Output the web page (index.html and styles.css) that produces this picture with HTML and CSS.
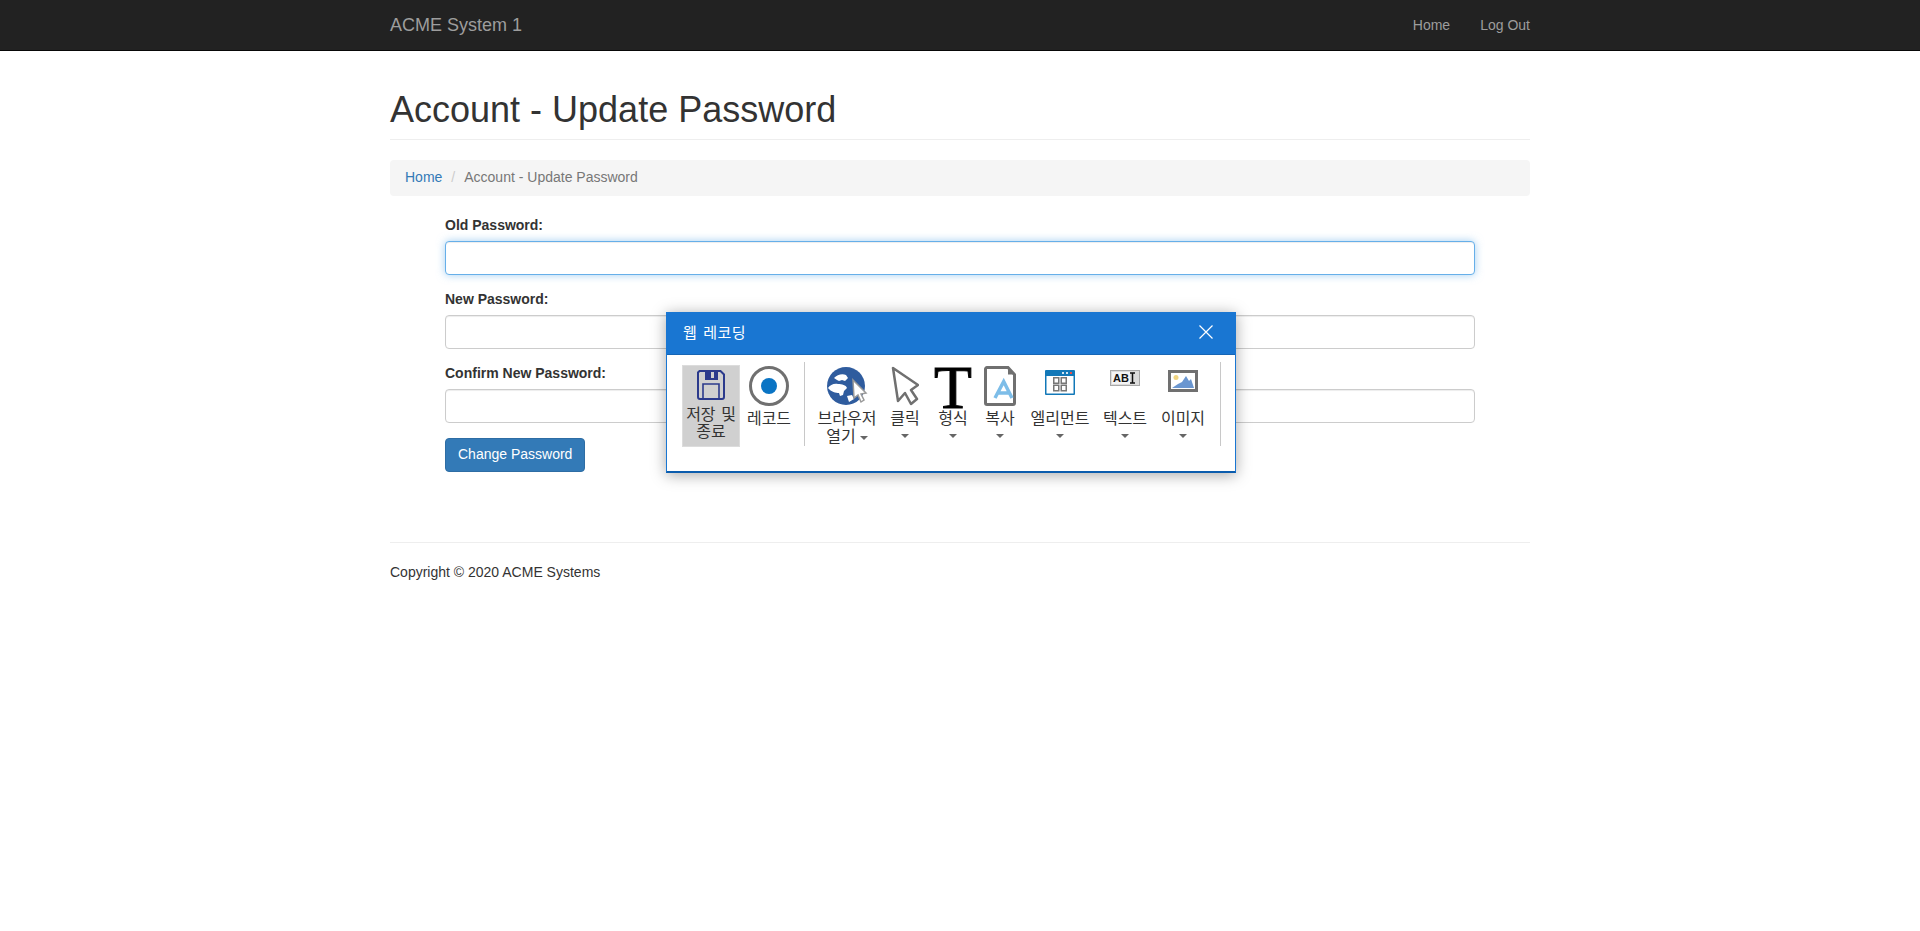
FILE: index.html
```html
<!DOCTYPE html>
<html lang="en">
<head>
    <meta charset="UTF-8">
    <title>Account - Update Password</title>
    <link rel="stylesheet" href="styles.css">
</head>
<body>

<div class="navbar">
    <div class="container navbar-inner">
        <a class="brand" href="#">ACME System 1</a>
        <ul class="nav-links">
            <li><a href="#">Home</a></li>
            <li><a href="#">Log Out</a></li>
        </ul>
    </div>
</div>

<div class="container">
    <div class="page-header"><h1>Account - Update Password</h1></div>

    <ol class="breadcrumb">
        <li><a href="#">Home</a></li>
        <li class="divider">/</li>
        <li class="active">Account - Update Password</li>
    </ol>

    <form class="password-form">
        <div class="form-group">
            <label for="old">Old Password:</label>
            <input id="old" class="form-control focused" type="password">
        </div>
        <div class="form-group">
            <label for="new">New Password:</label>
            <input id="new" class="form-control" type="password">
        </div>
        <div class="form-group">
            <label for="confirm">Confirm New Password:</label>
            <input id="confirm" class="form-control" type="password">
        </div>
        <button class="btn-primary" type="button">Change Password</button>
    </form>

    <hr class="footer-rule">
    <p class="copyright">Copyright © 2020 ACME Systems</p>
</div>

<div class="recorder">
    <div class="recorder-title">
        <span>웹 레코딩</span>
        <svg class="close-icon" width="14" height="14" viewBox="0 0 14 14"><path d="M0.5 0.5L13.5 13.5M13.5 0.5L0.5 13.5" stroke="#fff" stroke-width="1.2" fill="none"/></svg>
    </div>
    <div class="toolbar">
        <div class="tool tool-save">
            <div class="tool-icon">
                <svg width="28" height="30" viewBox="0 0 28 30">
                    <path d="M2.5 1h21l3.500 3.500V27a2 2 0 0 1-2 2H3a2 2 0 0 1-2-2V2.500z" fill="#d0d0d0" stroke="#2b3a8c" stroke-width="2"/>
                    <rect x="8" y="1" width="13" height="9" fill="#2b3a8c"/>
                    <rect x="14" y="2" width="3" height="6" fill="#d0d0d0"/>
                    <path d="M6 29V14h16v15" fill="none" stroke="#2b3a8c" stroke-width="1.600"/>
                </svg>
            </div>
            <div class="tool-label">저장 및<br>종료</div>
        </div>
        <div class="tool tool-record">
            <div class="tool-icon">
                <svg width="40" height="40" viewBox="0 0 40 40">
                    <circle cx="20" cy="20" r="18.500" fill="#fff" stroke="#707070" stroke-width="3"/>
                    <circle cx="20" cy="20" r="8" fill="#0a74c4"/>
                </svg>
            </div>
            <div class="tool-label">레코드</div>
        </div>
        <div class="tool-sep"></div>
        <div class="tool tool-browser">
            <div class="tool-icon">
                <svg width="42" height="40" viewBox="0 0 42 40">
                    <circle cx="20" cy="20" r="19" fill="#2f5c9e"/>
                    <path d="M8 12c3-3 8-5 12-3l2 3-3 3-3-1-3 1-2-1zM2 22c2-3 6-5 10-4 4 0 8 1 9 4l-3 3-1 4-3 1-1-3c-3 0-8-1-11-5zM21 30l5-1 2 4-5 3z" fill="#fff"/>
                    <path d="M27 14l13 13-5 1 3 6-3 2-3-7-4 3z" fill="#fff" stroke="#999" stroke-width="1.500"/>
                </svg>
            </div>
            <div class="tool-label">브라우저<br>열기<span class="caret caret-inline"></span></div>
        </div>
        <div class="tool tool-click">
            <div class="tool-icon">
                <svg width="28" height="40" viewBox="0 0 28 40">
                    <path d="M2 2L7 35 14 27 20 38 26 33 20 24 27 19z" fill="#fff" stroke="#707070" stroke-width="2.500" stroke-linejoin="round"/>
                </svg>
            </div>
            <div class="tool-label">클릭</div>
            <span class="caret"></span>
        </div>
        <div class="tool tool-format">
            <div class="tool-icon glyph-t">T</div>
            <div class="tool-label">형식</div>
            <span class="caret"></span>
        </div>
        <div class="tool tool-copy">
            <div class="tool-icon">
                <svg width="32" height="40" viewBox="0 0 32 40">
                    <path d="M3 1.500h21l6.500 7V37a1.500 1.500 0 0 1-1.500 1.500H3A1.500 1.500 0 0 1 1.500 37V3A1.500 1.500 0 0 1 3 1.500z" fill="#fff" stroke="#707070" stroke-width="3"/>
                    <path d="M24 1.500v7h6.500z" fill="#707070"/>
                    <path d="M11 32L19.700 15.500 28 32M14 27h11" fill="none" stroke="#7dbde8" stroke-width="3.500"/>
                </svg>
            </div>
            <div class="tool-label">복사</div>
            <span class="caret"></span>
        </div>
        <div class="tool tool-element">
            <div class="tool-icon">
                <svg class="icon-low" width="30" height="25" viewBox="0 0 30 25">
                    <rect width="30" height="25" rx="1" fill="#1278b8"/>
                    <rect x="1.500" y="6" width="27" height="17.500" fill="#fff"/>
                    <rect x="17" y="2" width="2" height="2" fill="#cfe4f2"/>
                    <rect x="21" y="2" width="2" height="2" fill="#cfe4f2"/>
                    <rect x="25" y="2" width="2" height="2" fill="#e8504a"/>
                    <g fill="none" stroke="#777" stroke-width="1.500">
                        <rect x="8.750" y="7.750" width="5" height="5.500"/>
                        <rect x="16.250" y="7.750" width="5" height="5.500"/>
                        <rect x="8.750" y="15.250" width="5" height="5.500"/>
                        <rect x="16.250" y="15.250" width="5" height="5.500"/>
                    </g>
                </svg>
            </div>
            <div class="tool-label">엘리먼트</div>
            <span class="caret"></span>
        </div>
        <div class="tool tool-text">
            <div class="tool-icon">
                <svg class="icon-low" width="30" height="16" viewBox="0 0 30 16">
                    <rect x="0.500" y="0.500" width="29" height="15" fill="#dcdcdc" stroke="#a8a8a8"/>
                    <rect x="2" y="2" width="18" height="12" fill="#f4f4f4"/>
                    <path d="M20 3h5M20 13h5M22.500 3v10" fill="none" stroke="#111" stroke-width="1.500"/>
                </svg>
                <span class="ab-text">AB</span>
            </div>
            <div class="tool-label">텍스트</div>
            <span class="caret"></span>
        </div>
        <div class="tool tool-image">
            <div class="tool-icon">
                <svg class="icon-low" width="30" height="22" viewBox="0 0 30 22">
                    <rect x="1.500" y="1.500" width="27" height="19" fill="#fff" stroke="#707070" stroke-width="3"/>
                    <circle cx="8" cy="7.500" r="2.500" fill="#f0d480"/>
                    <path d="M4 18L10 14 14 12 18 6 21 11 23 9 26 18z" fill="#6a96d0"/>
                </svg>
            </div>
            <div class="tool-label">이미지</div>
            <span class="caret"></span>
        </div>
        <div class="tool-sep tool-sep-end"></div>
    </div>
</div>

</body>
</html>
```

FILE: styles.css
```css
* {
    box-sizing: border-box;
}
body, html {
    margin: 0;
    padding: 0;
    color: #333;
    background: #fff;
    font: 14px/20px "Liberation Sans", Arial, sans-serif;
}
a {
    text-decoration: none;
}
.container {
    width: 1170px;
    margin: 0 auto;
    padding: 0 15px;
}

/* navbar */
.navbar {
    height: 51px;
    background: #222;
    border-bottom: 1px solid #080808;
}
.navbar-inner {
    display: flex;
    justify-content: space-between;
    align-items: center;
    height: 50px;
}
.brand {
    color: #9d9d9d;
    font-size: 18px;
}
.nav-links {
    display: flex;
    margin: 0 -15px 0 0;
    padding: 0;
    list-style: none;
}
.nav-links a {
    display: block;
    padding: 15px;
    color: #9d9d9d;
}

/* header + breadcrumb */
.page-header {
    margin: 0 0 20px;
    padding: 39px 0 9px;
    border-bottom: 1px solid #eee;
}
h1 {
    margin: 0;
    font-size: 36px;
    font-weight: 500;
    line-height: 39.600px;
}
.breadcrumb {
    display: flex;
    height: 36px;
    margin: 0 0 20px;
    padding: 7px 15px 9px;
    list-style: none;
    background: #f5f5f5;
    border-radius: 4px;
}
.breadcrumb a {
    color: #337ab7;
}
.breadcrumb .divider {
    padding: 0 9px;
    color: #ccc;
}
.breadcrumb .active {
    color: #777;
}

/* form */
.password-form {
    margin: 0 55px;
}
.form-group {
    margin-bottom: 15px;
}
label {
    display: block;
    margin-bottom: 7px;
    font-weight: 700;
    line-height: 18px;
}
.form-control {
    display: block;
    width: 100%;
    height: 34px;
    padding: 6px 12px;
    background: #fff;
    border: 1px solid #ccc;
    border-radius: 4px;
    box-shadow: inset 0 1px 1px rgba(0,0,0,.075);
}
.form-control.focused {
    outline: 0;
    border-color: #66afe9;
    box-shadow: inset 0 1px 1px rgba(0,0,0,.075), 0 0 8px rgba(102,175,233,.6);
}
.btn-primary {
    display: block;
    height: 34px;
    padding: 5px 12px 7px;
    color: #fff;
    font: inherit;
    background: #337ab7;
    border: 1px solid #2e6da4;
    border-radius: 4px;
}

/* footer */
.footer-rule {
    margin: 70px 0 19px;
    border: 0;
    border-top: 1px solid #eee;
}
.copyright {
    margin: 0;
}

/* recorder dialog */
.recorder {
    position: absolute;
    left: 666px;
    top: 312px;
    width: 570px;
    height: 161px;
    background: #fff;
    border: 1px solid #1976d2;
    border-bottom: 2px solid #0b5cad;
    box-shadow: 0 2px 14px rgba(0,0,0,.35);
    font-family: "Noto Sans CJK KR", sans-serif;
}
.recorder-title {
    display: flex;
    justify-content: space-between;
    align-items: center;
    height: 42px;
    padding: 0 22px 4px 16px;
    color: #fff;
    font-size: 15px;
    word-spacing: 2px;
    letter-spacing: .5px;
    background: #1976d2;
    border-bottom: 1px solid #1565b5;
}
.toolbar {
    display: flex;
    align-items: flex-start;
    padding: 10px 0 0 15px;
    color: #333;
}
.tool {
    display: flex;
    flex-direction: column;
    align-items: center;
    text-align: center;
    font-size: 16px;
    line-height: 18px;
}
.tool-icon {
    position: relative;
    display: flex;
    justify-content: center;
    height: 42px;
    margin-top: 1px;
}
.tool-label {
    white-space: nowrap;
}
.caret {
    width: 0;
    height: 0;
    margin-top: 8px;
    border-top: 4px solid #666;
    border-left: 4px solid transparent;
    border-right: 4px solid transparent;
}
.caret-inline {
    display: inline-block;
    margin: 0 0 2px 4px;
}
.tool-save {
    width: 58px;
    height: 82px;
    background: #d0d0d0;
    border: 1px solid #dcdcdc;
}
.tool-save .tool-icon {
    margin-top: 4px;
}
.tool-save .tool-label {
    margin-top: -7px;
    line-height: 16.500px;
    word-spacing: 2px;
}
.tool-record { width: 58px; }
.tool-browser { width: 60px; }
.tool-click { width: 56px; }
.tool-format { width: 40px; }
.tool-copy { width: 54px; }
.tool-element { width: 66px; }
.tool-text { width: 64px; }
.tool-image { width: 52px; }
.tool-sep {
    width: 1px;
    height: 84px;
    margin: -3px 12px 0 6px;
    background: #c8c8c8;
}
.tool-sep-end {
    margin: -3px 0 0 11px;
}
.icon-low {
    margin-top: 4px;
}
.glyph-t {
    width: 40px;
    color: #000;
    font: 62px/42px "Liberation Serif", serif;
    -webkit-text-stroke: 1px #000;
}
.ab-text {
    position: absolute;
    left: 3px;
    top: 5px;
    color: #111;
    font: 700 11px/14px "Liberation Sans", sans-serif;
}
```
